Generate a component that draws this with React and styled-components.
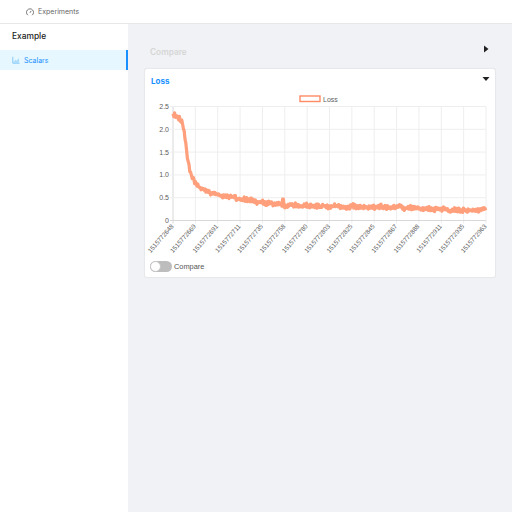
import React from 'react';
import styled, { createGlobalStyle } from 'styled-components';

const GlobalStyle = createGlobalStyle`
  html, body {
    margin: 0;
    height: 100%;
    background: #f0f2f5;
    font-family: "Inter", "Liberation Sans", sans-serif;
  }
  #root {
    height: 100%;
  }
`;

const Page = styled.div`
  display: flex;
  flex-direction: column;
  height: 512px;
  overflow: hidden;
`;

const TopBar = styled.header`
  display: flex;
  align-items: center;
  gap: 4px;
  height: 23px;
  padding-left: 26px;
  background: #fff;
  border-bottom: 1px solid #e8e8e8;
  font-size: 7px;
  color: #666;
`;

const Body = styled.div`
  display: flex;
  flex: 1;
`;

const Sidebar = styled.aside`
  width: 128px;
  background: #fff;
`;

const SideTitle = styled.h2`
  margin: 0;
  height: 26px;
  padding: 6px 0 0 12px;
  box-sizing: border-box;
  font-size: 8.4px;
  line-height: 13px;
  font-weight: 500;
  color: #222;
`;

const SideItem = styled.div`
  display: flex;
  align-items: center;
  gap: 4px;
  height: 20px;
  padding-left: 12px;
  background: ${(p) => (p.$active ? '#e6f7ff' : 'transparent')};
  border-right: 2px solid ${(p) => (p.$active ? '#1890ff' : 'transparent')};
  color: #1890ff;
  font-size: 7px;
`;

const Main = styled.main`
  flex: 1;
  padding: 20px 16px 0;
`;

const Section = styled.div`
  display: flex;
  align-items: center;
  justify-content: space-between;
  height: 16px;
  margin-bottom: 8px;
  padding: 0 6px;
`;

const SectionTitle = styled.span`
  font-size: 8.3px;
  font-weight: 600;
  color: #d6d6d6;
`;

const Card = styled.section`
  width: 352px;
  height: 210px;
  box-sizing: border-box;
  background: #fff;
  border: 1px solid #e6e8ec;
  border-radius: 3px;
  box-shadow: 0 0 1px rgba(0, 0, 0, 0.06);
`;

const CardHead = styled.div`
  display: flex;
  align-items: center;
  justify-content: space-between;
  box-sizing: border-box;
  height: 23px;
  padding: 0 5px 0 6px;
`;

const CardTitle = styled.span`
  font-size: 8px;
  font-weight: 700;
  color: #1890ff;
`;

const ChartSvg = styled.svg`
  display: block;
`;

const AxisText = styled.text`
  font-family: "Liberation Sans", sans-serif;
  font-size: ${(p) => p.$size || 7}px;
  fill: #5c5c5c;
`;

const CompareRow = styled.label`
  display: flex;
  align-items: center;
  gap: 2px;
  padding-left: 5px;
  height: 12px;
  font-family: "Liberation Sans", sans-serif;
  font-size: 7.4px;
  color: #555;
`;

const Track = styled.span`
  position: relative;
  width: 22px;
  height: 11px;
  border-radius: 6px;
  background: #bdbdbd;
`;

const Knob = styled.span`
  position: absolute;
  left: 0;
  top: 0;
  width: 11px;
  height: 11px;
  box-sizing: border-box;
  border-radius: 50%;
  background: #fff;
  border: 1px solid #c4c4c4;
`;

const CaretSvg = styled.svg`
  margin-bottom: ${(p) => p.$lift}px;
`;

const Caret = ({ down }) => (
  <CaretSvg $lift={down ? 4 : 6} width="8" height="8" viewBox="0 0 8 8">
    <path d={down ? 'M0.5 2 H7.5 L4 6 Z' : 'M2 0.5 L6.5 4 L2 7.5 Z'} fill="#222" />
  </CaretSvg>
);

const GaugeIcon = () => (
  <svg width="8" height="8" viewBox="0 0 10 10" fill="none" stroke="#666" strokeWidth="1.1">
    <path d="M2.4 9 A4.4 4.4 0 1 1 7.6 9" />
    <path d="M5 6 L6.4 3.6" />
  </svg>
);

const AreaIcon = () => (
  <svg width="8" height="8" viewBox="0 0 10 10" fill="none" stroke="#6cbcf7" strokeWidth="1">
    <path d="M2.2 7.6 L4 4.8 L5.8 6 L8.8 2.4 V8 H2.2 Z" fill="#a9dcfb" stroke="none" />
    <path d="M1 1 V9 H9.5" />
  </svg>
);

// chart geometry, in card coordinates (content starts 145,69 on the page)
const W = 350;
const H = 168;
const OX = 28;
const OY = 14.5;
const PLOT_W = 313;
const PLOT_H = 114;

const labels = [
  '1515772648', '1515772669', '1515772691', '1515772711', '1515772735',
  '1515772758', '1515772780', '1515772803', '1515772825', '1515772845',
  '1515772867', '1515772888', '1515772911', '1515772935', '1515772963',
];

const curve = [
  [0, 2.34], [4, 2.27], [7, 2.24], [10, 2.13], [12, 1.82], [14, 1.42], [17, 1.05],
  [22, 0.84], [27, 0.73], [34, 0.64], [47, 0.55], [67, 0.48], [88, 0.4],
  [110, 0.34], [147, 0.31], [227, 0.29], [267, 0.24], [297, 0.22], [313, 0.24],
];

const valueAt = (x) => {
  for (let i = 1; i < curve.length; i++) {
    if (x <= curve[i][0]) {
      const [x0, y0] = curve[i - 1];
      const [x1, y1] = curve[i];
      return y0 + ((y1 - y0) * (x - x0)) / (x1 - x0);
    }
  }
  return 0.24;
};

const linePoints = () => {
  const pts = [];
  for (let x = 0; x <= PLOT_W; x += 0.8) {
    const noise = (Math.sin(x * 12.9898) * 43758.5453) % 1;
    const bump = Math.sin(x * 0.55) * Math.sin(x * 0.13) * 0.018;
    let v = valueAt(x) + noise * 0.05 + bump;
    if (Math.abs(x - 110) < 0.5) v = 0.47;
    pts.push(`${(OX + x).toFixed(1)},${(OY + PLOT_H - (v * PLOT_H) / 2.5).toFixed(1)}`);
  }
  return pts.join(' ');
};

const Chart = () => {
  const step = PLOT_W / 14;
  const base = OY + PLOT_H;
  return (
    <ChartSvg width={W} height={H} viewBox={`0 0 ${W} ${H}`}>
      {labels.map((l, i) => (
        <line key={l} x1={OX + i * step} x2={OX + i * step} y1={OY} y2={base + 3} stroke={i === 0 ? '#d8d8d8' : '#eeeeee'} />
      ))}
      {[0, 0.5, 1, 1.5, 2, 2.5].map((v) => {
        const y = base - (v * PLOT_H) / 2.5;
        return (
          <g key={v}>
            <line x1={OX - 3} x2={OX + PLOT_W} y1={y} y2={y} stroke={v === 0 ? '#d8d8d8' : '#eeeeee'} />
            <AxisText x={OX - 4} y={y + 2.5} textAnchor="end">{v === 0 ? '0' : v.toFixed(1)}</AxisText>
          </g>
        );
      })}
      <rect x="155" y="4" width="20" height="5.5" fill="#fff" stroke="#ff8a65" strokeWidth="1.4" />
      <AxisText x="178" y="9.5">Loss</AxisText>
      <polyline points={linePoints()} fill="none" stroke="#ff9f7c" strokeWidth="3.2" strokeLinejoin="round" />
      {labels.map((l, i) => {
        const x = OX + i * step + 1;
        const y = base + 6;
        return (
          <AxisText key={l} $size={6.4} x={x} y={y} textAnchor="end" transform={`rotate(-49 ${x} ${y})`}>{l}</AxisText>
        );
      })}
    </ChartSvg>
  );
};

export default function App() {
  return (
    <Page>
      <GlobalStyle />
      <TopBar>
        <GaugeIcon />
        <span>Experiments</span>
      </TopBar>
      <Body>
        <Sidebar>
          <SideTitle>Example</SideTitle>
          <SideItem $active>
            <AreaIcon />
            <span>Scalars</span>
          </SideItem>
        </Sidebar>
        <Main>
          <Section>
            <SectionTitle>Compare</SectionTitle>
            <Caret />
          </Section>
          <Card>
            <CardHead>
              <CardTitle>Loss</CardTitle>
              <Caret down />
            </CardHead>
            <Chart />
            <CompareRow>
              <Track><Knob /></Track>
              <span>Compare</span>
            </CompareRow>
          </Card>
        </Main>
      </Body>
    </Page>
  );
}
